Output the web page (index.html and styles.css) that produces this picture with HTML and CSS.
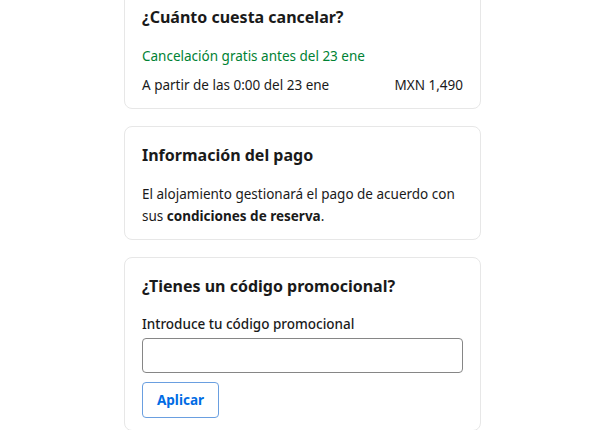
FILE: index.html
```html
<!DOCTYPE html>
<html lang="es">
<head>
  <meta charset="UTF-8">
  <meta name="viewport" content="width=device-width, initial-scale=1.0">
  <title>Detalles de la reserva</title>
  <link rel="stylesheet" href="styles.css">
</head>
<body>
  <main class="sidebar">
    <section class="card">
      <h3>¿Cuánto cuesta cancelar?</h3>
      <p class="free">Cancelación gratis antes del 23 ene</p>
      <div class="fee-row">
        <span>A partir de las 0:00 del 23 ene</span>
        <span>MXN 1,490</span>
      </div>
    </section>

    <section class="card">
      <h3>Información del pago</h3>
      <p class="text">El alojamiento gestionará el pago de acuerdo con sus <strong>condiciones de reserva</strong>.</p>
    </section>

    <section class="card promo">
      <h3>¿Tienes un código promocional?</h3>
      <form class="promo-form" onsubmit="return false">
        <label for="promoCode">Introduce tu código promocional</label>
        <input type="text" id="promoCode">
        <button type="submit">Aplicar</button>
      </form>
    </section>
  </main>
</body>
</html>
```

FILE: styles.css
```css
* {
  box-sizing: border-box;
}
body {
  font-family: 'Noto Sans', 'Open Sans', sans-serif;
  margin: 0;
  background-color: #fff;
  color: #1a1a1a;
  font-size: 13.5px;
}
.sidebar {
  width: 357px;
  margin: -12px 0 0 124px;
  display: flex;
  flex-direction: column;
  gap: 17px;
}
.card {
  border: 1px solid #e7e7e7;
  border-radius: 8px;
  padding: 16px 17px 12px;
}
.card h3 {
  margin: 0 0 16px;
  font-size: 16px;
  line-height: 24px;
  font-weight: 700;
}
.free {
  margin: 0 0 7px;
  color: #008234;
  line-height: 22px;
}
.fee-row {
  display: flex;
  justify-content: space-between;
  line-height: 22px;
}
.text {
  margin: 0;
  line-height: 22px;
}
.text strong {
  font-weight: 700;
}
.promo-form {
  display: flex;
  flex-direction: column;
  align-items: flex-start;
}
.promo-form label {
  font-weight: 500;
  line-height: 20px;
  margin-bottom: 4px;
}
.promo-form input {
  width: 100%;
  height: 35px;
  border: 1px solid #868686;
  border-radius: 4px;
  padding: 0 8px;
  font: inherit;
  margin-bottom: 9px;
}
.promo-form button {
  height: 36px;
  padding: 0 14px;
  background-color: #fff;
  color: #006ce4;
  border: 1px solid #6a9fe0;
  border-radius: 4px;
  font: inherit;
  font-weight: 700;
  cursor: pointer;
}
```
